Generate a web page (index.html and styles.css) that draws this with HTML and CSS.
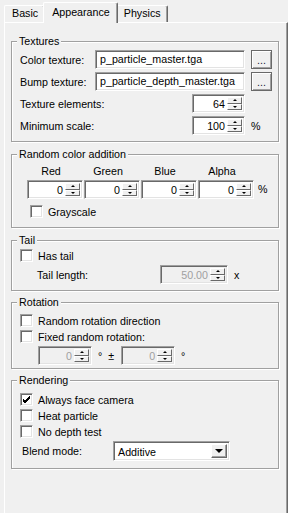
FILE: index.html
```html
<!DOCTYPE html>
<html lang="en">
<head>
  <meta charset="UTF-8">
  <title>Particle properties</title>
  <link rel="stylesheet" href="styles.css">
</head>
<body>
  <div class="tabs">
    <div class="tab">Basic</div>
    <div class="tab active">Appearance</div>
    <div class="tab">Physics</div>
  </div>

  <div class="panel">

    <!-- Textures -->
    <fieldset class="group textures">
      <legend>Textures</legend>
      <div class="row">
        <span class="lbl">Color texture:</span>
        <span class="edit">p_particle_master.tga</span>
        <span class="btn">...</span>
      </div>
      <div class="row">
        <span class="lbl">Bump texture:</span>
        <span class="edit">p_particle_depth_master.tga</span>
        <span class="btn">...</span>
      </div>
      <div class="row">
        <span class="lbl grow">Texture elements:</span>
        <span class="spin w53"><span class="val">64</span><span class="arrows"><i class="up"></i><i class="down"></i></span></span>
        <span class="unit"></span>
      </div>
      <div class="row">
        <span class="lbl grow">Minimum scale:</span>
        <span class="spin w53"><span class="val">100</span><span class="arrows"><i class="up"></i><i class="down"></i></span></span>
        <span class="unit">%</span>
      </div>
    </fieldset>

    <!-- Random color addition -->
    <fieldset class="group colors">
      <legend>Random color addition</legend>
      <div class="color-grid">
        <span class="col-title">Red</span>
        <span class="col-title">Green</span>
        <span class="col-title">Blue</span>
        <span class="col-title">Alpha</span>
        <span></span>
        <span class="spin"><span class="val">0</span><span class="arrows"><i class="up"></i><i class="down"></i></span></span>
        <span class="spin"><span class="val">0</span><span class="arrows"><i class="up"></i><i class="down"></i></span></span>
        <span class="spin"><span class="val">0</span><span class="arrows"><i class="up"></i><i class="down"></i></span></span>
        <span class="spin"><span class="val">0</span><span class="arrows"><i class="up"></i><i class="down"></i></span></span>
        <span class="pct">%</span>
      </div>
      <label class="check gray-check"><span class="box"></span>Grayscale</label>
    </fieldset>

    <!-- Tail -->
    <fieldset class="group tail">
      <legend>Tail</legend>
      <label class="check"><span class="box"></span>Has tail</label>
      <div class="row tail-row">
        <span class="lbl grow">Tail length:</span>
        <span class="spin w68 disabled"><span class="val">50.00</span><span class="arrows"><i class="up"></i><i class="down"></i></span></span>
        <span class="unit">x</span>
      </div>
    </fieldset>

    <!-- Rotation -->
    <fieldset class="group rotation">
      <legend>Rotation</legend>
      <label class="check first"><span class="box"></span>Random rotation direction</label>
      <label class="check"><span class="box"></span>Fixed random rotation:</label>
      <div class="row rot-row">
        <span class="spin w54 disabled"><span class="val">0</span><span class="arrows"><i class="up"></i><i class="down"></i></span></span>
        <span class="deg">°&nbsp; ±</span>
        <span class="spin w54 disabled"><span class="val">0</span><span class="arrows"><i class="up"></i><i class="down"></i></span></span>
        <span class="deg">°</span>
      </div>
    </fieldset>

    <!-- Rendering -->
    <fieldset class="group rendering">
      <legend>Rendering</legend>
      <label class="check first"><span class="box checked"><svg width="9" height="9" viewBox="0 0 9 9"><path d="M1 4 L3 6 L8 1 M1 5 L3 7 L8 2 M1 6 L3 8 L8 3" stroke="#000" stroke-width="1" fill="none"/></svg></span>Always face camera</label>
      <label class="check"><span class="box"></span>Heat particle</label>
      <label class="check"><span class="box"></span>No depth test</label>
      <div class="row blend-row">
        <span class="lbl blend-lbl">Blend mode:</span>
        <span class="combo"><span class="combo-val">Additive</span><span class="drop"><i></i></span></span>
      </div>
    </fieldset>

  </div>
</body>
</html>
```

FILE: styles.css
```css
* {
  box-sizing: border-box;
}

html, body {
  margin: 0;
  padding: 0;
}

body {
  width: 288px;
  height: 513px;
  overflow: hidden;
  display: flex;
  flex-direction: column;
  background-color: #f0f0f0;
  font-family: "Liberation Sans", Arial, sans-serif;
  font-size: 10.7px;
  color: #000;
}

/* tab strip */
.tabs {
  display: flex;
  align-items: flex-end;
  height: 22px;
  padding-left: 4px;
  position: relative;
  z-index: 1;
}

.tab {
  height: 17px;
  line-height: 15px;
  padding: 0 6px 0 7px;
  border-top: 1px solid #fff;
  border-left: 1px solid #fff;
  border-right: 1px solid #696969;
  box-shadow: inset -1px 0 0 #a0a0a0;
  border-radius: 2px 2px 0 0;
  background-color: #f0f0f0;
}

.tab.active {
  height: 21px;
  line-height: 18px;
  margin: 0 -2px -1px -2px;
  padding: 0 7px 0 8px;
  position: relative;
  z-index: 2;
}

/* tab page */
.panel {
  flex: 1;
  margin-left: 4px;
  width: 284px;
  padding: 12px 8px 0 6px;
  border-top: 1px solid #fff;
  border-left: 1px solid #fff;
  border-right: 1px solid #696969;
  box-shadow: inset -1px 0 0 #a0a0a0;
}

/* group boxes */
.group {
  margin: 0 0 6px 0;
  padding: 2px 5px 3px 8px;
  min-width: 0;
  border: 1px solid #a0a0a0;
  box-shadow: 1px 1px 0 #fff, inset 1px 1px 0 #fff;
}

.group legend {
  margin-left: -3px;
  padding: 0 2px;
  height: 13px;
  line-height: 13px;
  background-color: #f0f0f0;
}

.tail, .rotation {
  margin-bottom: 5px;
}

.row {
  display: flex;
  align-items: center;
  height: 19px;
  margin-bottom: 3px;
}

.lbl {
  width: 75px;
  white-space: nowrap;
}

.grow {
  flex: 1;
}

.unit {
  width: 28px;
  padding-left: 6px;
}

/* sunken edit */
.edit, .spin, .combo, .box {
  background-color: #fff;
  border-top: 1px solid #a0a0a0;
  border-left: 1px solid #a0a0a0;
  border-bottom: 1px solid #fff;
  border-right: 1px solid #fff;
  box-shadow: inset 1px 1px 0 #696969, inset -1px -1px 0 #e3e3e3;
}

.edit {
  width: 150px;
  height: 19px;
  line-height: 17px;
  padding-left: 4px;
  white-space: nowrap;
  overflow: hidden;
}

.btn {
  width: 21px;
  height: 19px;
  margin-left: 6px;
  border: 1px solid #696969;
  box-shadow: inset 1px 1px 0 #fff, inset -1px -1px 0 #a0a0a0;
  text-align: center;
  line-height: 18px;
  color: #1a1a3a;
}

/* spin box */
.spin {
  display: flex;
  height: 19px;
  padding: 2px;
}

.w53 { width: 53px; }
.w54 { width: 54px; }
.w68 { width: 68px; }

.spin .val {
  flex: 1;
  text-align: right;
  padding-right: 2px;
  line-height: 14px;
}

.spin .arrows {
  display: flex;
  flex-direction: column;
  width: 15px;
}

.arrows i {
  flex: 1;
  display: flex;
  align-items: center;
  justify-content: center;
  background-color: #f0f0f0;
  border-top: 1px solid #fff;
  border-left: 1px solid #fff;
  border-right: 1px solid #696969;
  border-bottom: 1px solid #696969;
}

.arrows i::after {
  content: "";
  width: 0;
  height: 0;
  border-left: 2px solid transparent;
  border-right: 2px solid transparent;
}

.arrows .up::after {
  border-bottom: 2px solid #000;
}

.arrows .down::after {
  border-top: 2px solid #000;
}

.spin.disabled {
  background-color: #f0f0f0;
  color: #a0a0a0;
}

/* color grid */
.color-grid {
  display: grid;
  grid-template-columns: 56px 56px 56px 56px 20px;
  column-gap: 1px;
  row-gap: 2px;
  margin: 2px 0 0 7px;
}

.col-title {
  text-align: center;
  padding-right: 8px;
  height: 13px;
  line-height: 13px;
}

.color-grid .spin {
  width: 56px;
}

.pct {
  line-height: 19px;
  padding-left: 3px;
}

/* checkboxes */
.check {
  display: flex;
  align-items: center;
  height: 13px;
  margin-bottom: 3px;
  white-space: nowrap;
}

.box {
  width: 13px;
  height: 13px;
  margin-right: 5px;
  display: flex;
  align-items: center;
  justify-content: center;
}

.gray-check {
  margin: 6px 0 6px 10px;
}

.tail-row {
  padding-left: 17px;
  margin-top: 3px;
}

.tail-row .unit {
  width: 45px;
}

.rotation .first {
  margin-top: 3px;
}

.rot-row {
  padding-left: 18px;
  margin-bottom: 0;
}

.deg {
  padding: 0 7px 0 6px;
}

.rendering .first {
  margin-top: 4px;
}

/* combo box */
.blend-row {
  margin-bottom: 4px;
  height: 20px;
}

.blend-lbl {
  width: 93px;
  padding-left: 2px;
}

.combo {
  display: flex;
  width: 117px;
  height: 20px;
  padding: 2px;
}

.combo-val {
  flex: 1;
  line-height: 16px;
  padding-left: 2px;
}

.drop {
  width: 16px;
  display: flex;
  align-items: center;
  justify-content: center;
  background-color: #f0f0f0;
  border-top: 1px solid #fff;
  border-left: 1px solid #fff;
  border-right: 1px solid #696969;
  border-bottom: 1px solid #696969;
  box-shadow: inset -1px -1px 0 #a0a0a0;
}

.drop i {
  width: 0;
  height: 0;
  border-left: 4px solid transparent;
  border-right: 4px solid transparent;
  border-top: 4px solid #000;
}
```
